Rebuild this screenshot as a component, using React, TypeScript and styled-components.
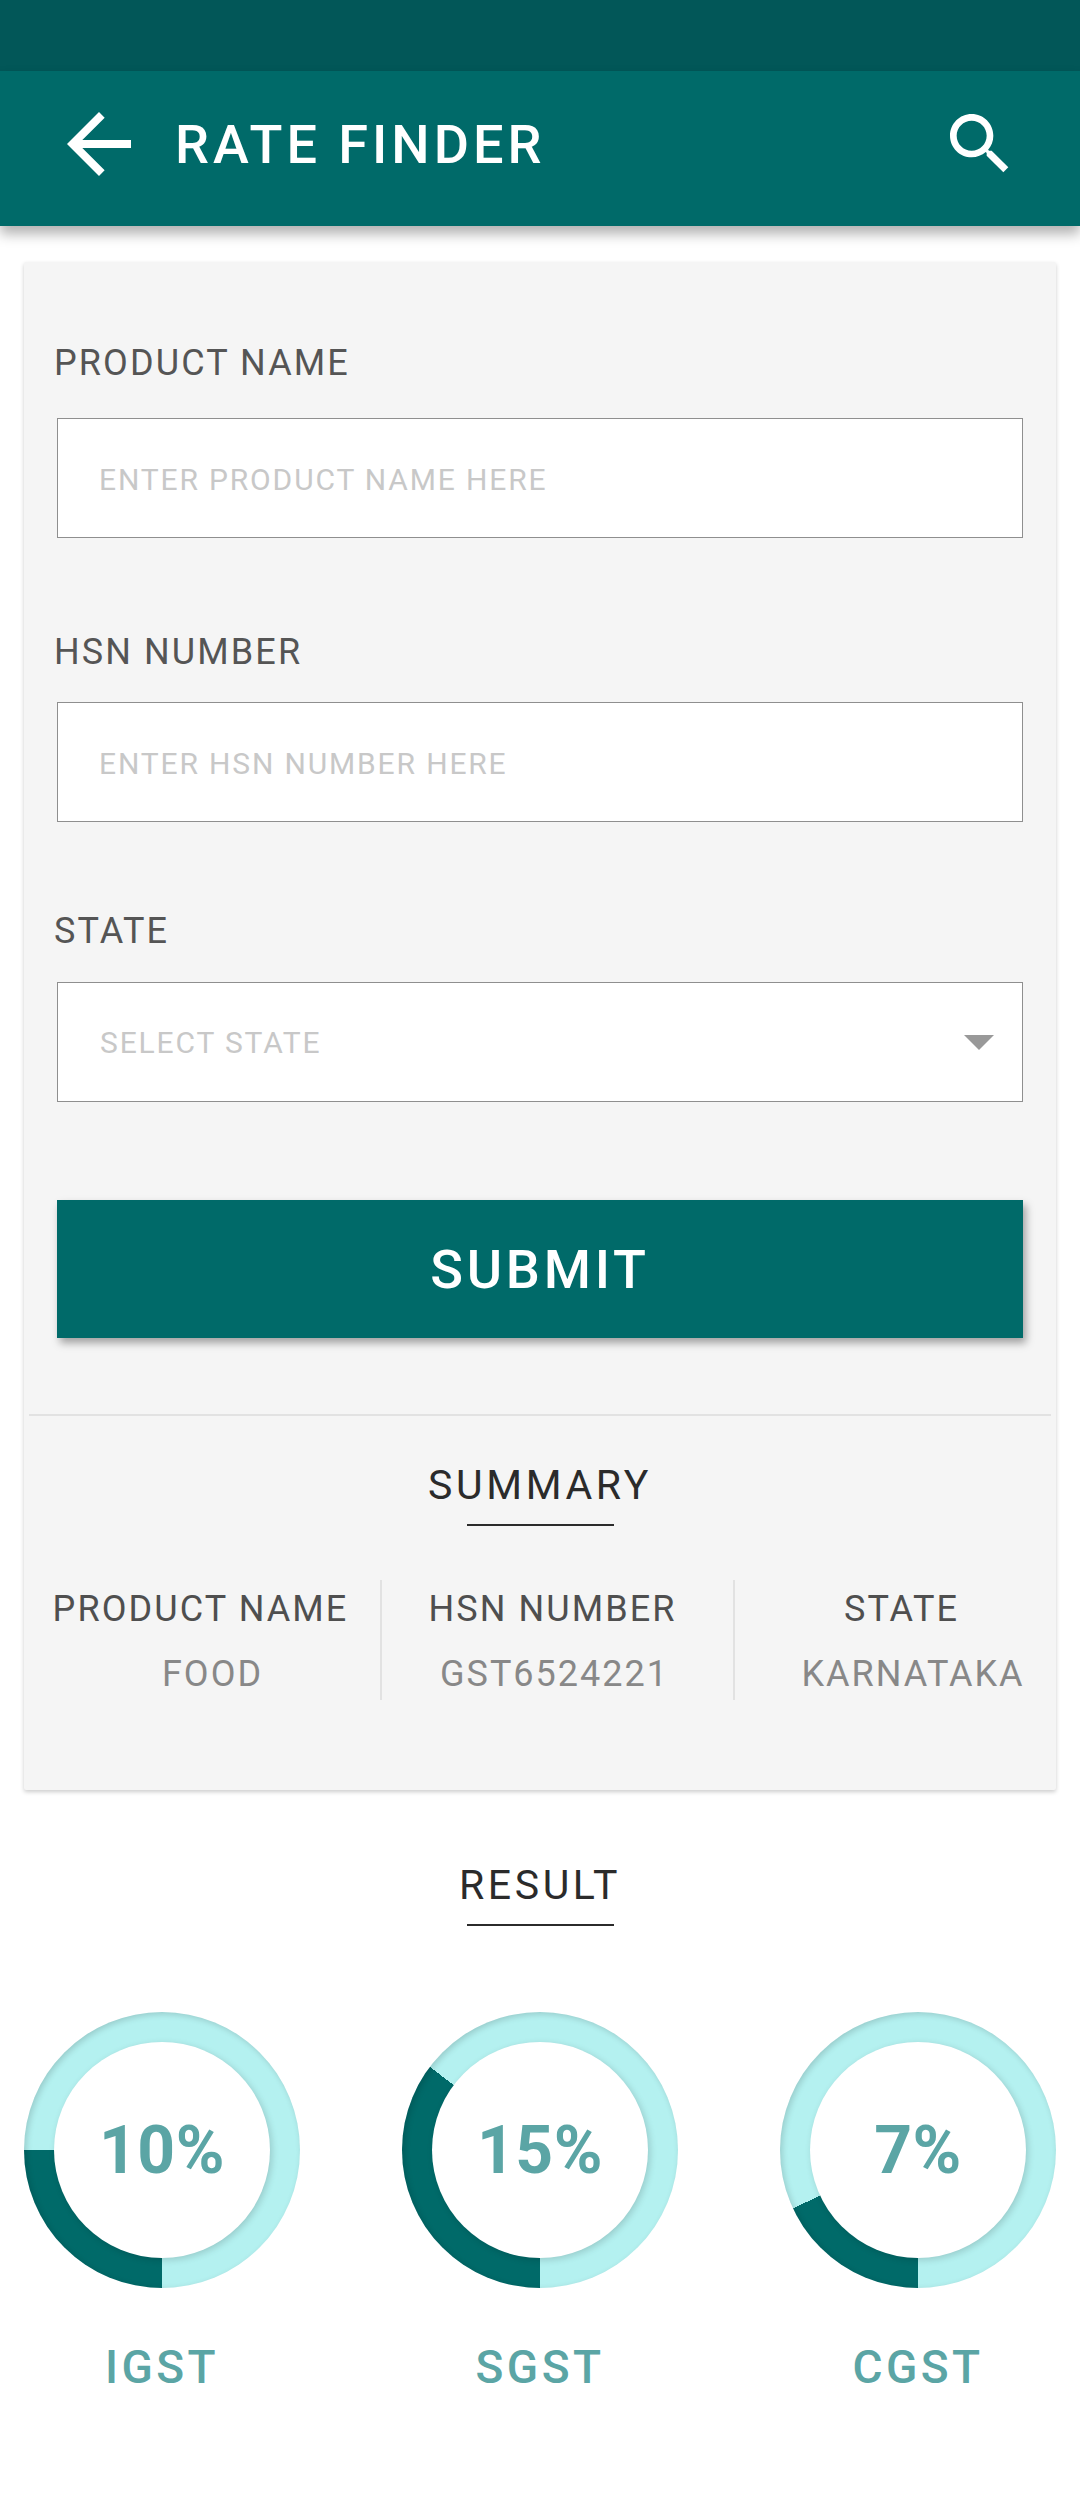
import React from 'react';
import styled, { createGlobalStyle } from 'styled-components';

const GlobalStyle = createGlobalStyle`
  html, body {
    margin: 0;
    background: #fff;
  }
  * {
    box-sizing: border-box;
  }
`;

const Page = styled.div`
  width: 1080px;
  height: 2500px;
  overflow: hidden;
  display: flex;
  flex-direction: column;
  font-family: Roboto, "Liberation Sans", sans-serif;
  background: #fff;
`;

const StatusBar = styled.div`
  height: 71px;
  background: #025758;
`;

const Header = styled.header`
  height: 155px;
  padding: 0 60px 9px 51px;
  display: flex;
  align-items: center;
  background: #006a69;
  box-shadow: 0 8px 12px rgba(0, 0, 0, 0.3);
  position: relative;
`;

const Title = styled.h1`
  flex: 1;
  margin: 0 0 0 28px;
  font-size: 54px;
  font-weight: 500;
  letter-spacing: 4px;
  color: #fff;
`;

const HeaderIcon = styled.svg`
  display: block;
  fill: #fff;
`;

const Card = styled.section`
  margin: 36px 24px 0;
  height: 1528px;
  padding: 0 33px;
  background: #f5f5f5;
  border-radius: 2px;
  box-shadow: 0 2px 4px rgba(0, 0, 0, 0.2);
  display: flex;
  flex-direction: column;
`;

const Field = styled.div<{ $top: number; $gap: number }>`
  margin-top: ${(p) => p.$top}px;
  display: flex;
  flex-direction: column;
  gap: ${(p) => p.$gap}px;
`;

const FieldLabel = styled.label`
  margin-left: -3px;
  height: 50px;
  line-height: 50px;
  font-size: 36px;
  letter-spacing: 2.1px;
  color: #555;
`;

const TextInput = styled.input`
  width: 100%;
  height: 120px;
  padding: 2px 41px 0;
  border: 1px solid #8f8f8f;
  border-radius: 0;
  background: #fff;
  outline: none;
  font-family: inherit;
  font-size: 30px;
  letter-spacing: 1.85px;

  &::placeholder {
    color: #c8c8c8;
    opacity: 1;
  }
`;

const Select = styled.div`
  height: 120px;
  padding: 0 28px 0 42px;
  border: 1px solid #8f8f8f;
  background: #fff;
  display: flex;
  align-items: center;
  justify-content: space-between;
  font-size: 30px;
  letter-spacing: 1.85px;
  color: #c8c8c8;
`;

const Caret = styled.span`
  width: 0;
  height: 0;
  border-left: 15px solid transparent;
  border-right: 15px solid transparent;
  border-top: 15px solid #999;
`;

const SubmitButton = styled.button`
  margin-top: 98px;
  height: 138px;
  border: 0;
  background: #006a69;
  color: #fff;
  font-family: inherit;
  font-size: 54px;
  font-weight: 500;
  letter-spacing: 3.8px;
  box-shadow: 3px 5px 8px rgba(0, 0, 0, 0.35);
`;

const Divider = styled.hr`
  margin: 76px -28px 0;
  height: 2px;
  border: 0;
  background: #e2e2e2;
`;

const SectionHeading = styled.div<{ $top: number }>`
  margin-top: ${(p) => p.$top}px;
  display: flex;
  flex-direction: column;
  align-items: center;
  color: #2b2b2b;
  font-size: 41px;
  letter-spacing: 3.6px;
  line-height: 50px;

  &::after {
    content: '';
    width: 147px;
    height: 2px;
    margin-top: 14px;
    background: #2b2b2b;
  }
`;

const SummaryGrid = styled.div`
  margin: 54px -33px 0;
  display: grid;
  grid-template-columns: 356px 353px 323px;
  height: 120px;
`;

const SummaryColumn = styled.div<{ $divided?: boolean; $shift: number }>`
  display: flex;
  flex-direction: column;
  align-items: center;
  padding-right: ${(p) => (p.$shift < 0 ? -p.$shift : 0)}px;
  padding-left: ${(p) => (p.$shift > 0 ? p.$shift : 0)}px;
  padding-top: 4px;
  border-left: ${(p) => (p.$divided ? '2px solid #e2e2e2' : '0')};
`;

const SummaryName = styled.div`
  font-size: 36px;
  line-height: 50px;
  letter-spacing: 2.1px;
  color: #4f4f4f;
`;

const SummaryValue = styled.div<{ $shift: number }>`
  margin-top: 15px;
  padding-left: ${(p) => p.$shift}px;
  font-size: 36px;
  line-height: 50px;
  letter-spacing: 2px;
  color: #888;
`;

const Rates = styled.div`
  margin-top: 86px;
  padding: 0 24px;
  display: flex;
  justify-content: space-between;
`;

const Rate = styled.div`
  width: 276px;
  display: flex;
  flex-direction: column;
  align-items: center;
`;

const Ring = styled.div<{ $sweep: number }>`
  width: 276px;
  height: 276px;
  border-radius: 50%;
  display: flex;
  align-items: center;
  justify-content: center;
  background: conic-gradient(
    #b4f1f0 0deg 180deg,
    #006a69 180deg ${(p) => 180 + p.$sweep}deg,
    #b4f1f0 ${(p) => 180 + p.$sweep}deg 360deg
  );
  box-shadow: inset 2px 2px 6px rgba(0, 0, 0, 0.16);
`;

const RingCenter = styled.div`
  width: 216px;
  height: 216px;
  border-radius: 50%;
  background: #fff;
  display: flex;
  align-items: center;
  justify-content: center;
  box-shadow: 2px 2px 7px rgba(0, 0, 0, 0.16);
  font-size: 66px;
  font-weight: 700;
  letter-spacing: 0.5px;
  color: #5ba5a5;
`;

const RateName = styled.div`
  margin-top: 51px;
  font-size: 46px;
  font-weight: 500;
  line-height: 56px;
  letter-spacing: 3.5px;
  color: #5ba5a5;
`;

const summary = [
  { name: 'PRODUCT NAME', value: 'FOOD', shift: -3, valueShift: 24 },
  { name: 'HSN NUMBER', value: 'GST6524221', shift: -10, valueShift: 4 },
  { name: 'STATE', value: 'KARNATAKA', shift: 12, valueShift: 23 },
];

const rates = [
  { name: 'IGST', percent: '10%', sweep: 90 },
  { name: 'SGST', percent: '15%', sweep: 127 },
  { name: 'CGST', percent: '7%', sweep: 65 },
];

const App: React.FC = () => (
  <Page>
    <GlobalStyle />
    <StatusBar />
    <Header>
      <HeaderIcon width="96" height="96" viewBox="0 0 24 24">
        <path d="M20 11H7.83l5.59-5.59L12 4l-8 8 8 8 1.41-1.41L7.83 13H20v-2z" />
      </HeaderIcon>
      <Title>RATE FINDER</Title>
      <HeaderIcon width="80" height="80" viewBox="0 0 24 24">
        <path d="M15.5 14h-.79l-.28-.27C15.41 12.59 16 11.11 16 9.5 16 5.91 13.09 3 9.5 3S3 5.91 3 9.5 5.91 16 9.5 16c1.61 0 3.09-.59 4.23-1.57l.27.28v.79l5 4.99L20.49 19l-4.99-5zm-6 0C7.01 14 5 11.99 5 9.5S7.01 5 9.5 5 14 7.01 14 9.5 11.99 14 9.5 14z" />
      </HeaderIcon>
    </Header>
    <Card>
      <Field $top={76} $gap={30}>
        <FieldLabel>PRODUCT NAME</FieldLabel>
        <TextInput placeholder="ENTER PRODUCT NAME HERE" />
      </Field>
      <Field $top={89} $gap={25}>
        <FieldLabel>HSN NUMBER</FieldLabel>
        <TextInput placeholder="ENTER HSN NUMBER HERE" />
      </Field>
      <Field $top={84} $gap={26}>
        <FieldLabel>STATE</FieldLabel>
        <Select>
          SELECT STATE
          <Caret />
        </Select>
      </Field>
      <SubmitButton>SUBMIT</SubmitButton>
      <Divider />
      <SectionHeading $top={44}>SUMMARY</SectionHeading>
      <SummaryGrid>
        {summary.map((item, index) => (
          <SummaryColumn key={item.name} $divided={index > 0} $shift={item.shift}>
            <SummaryName>{item.name}</SummaryName>
            <SummaryValue $shift={item.valueShift}>{item.value}</SummaryValue>
          </SummaryColumn>
        ))}
      </SummaryGrid>
    </Card>
    <SectionHeading $top={70}>RESULT</SectionHeading>
    <Rates>
      {rates.map((rate) => (
        <Rate key={rate.name}>
          <Ring $sweep={rate.sweep}>
            <RingCenter>{rate.percent}</RingCenter>
          </Ring>
          <RateName>{rate.name}</RateName>
        </Rate>
      ))}
    </Rates>
  </Page>
);

export default App;
